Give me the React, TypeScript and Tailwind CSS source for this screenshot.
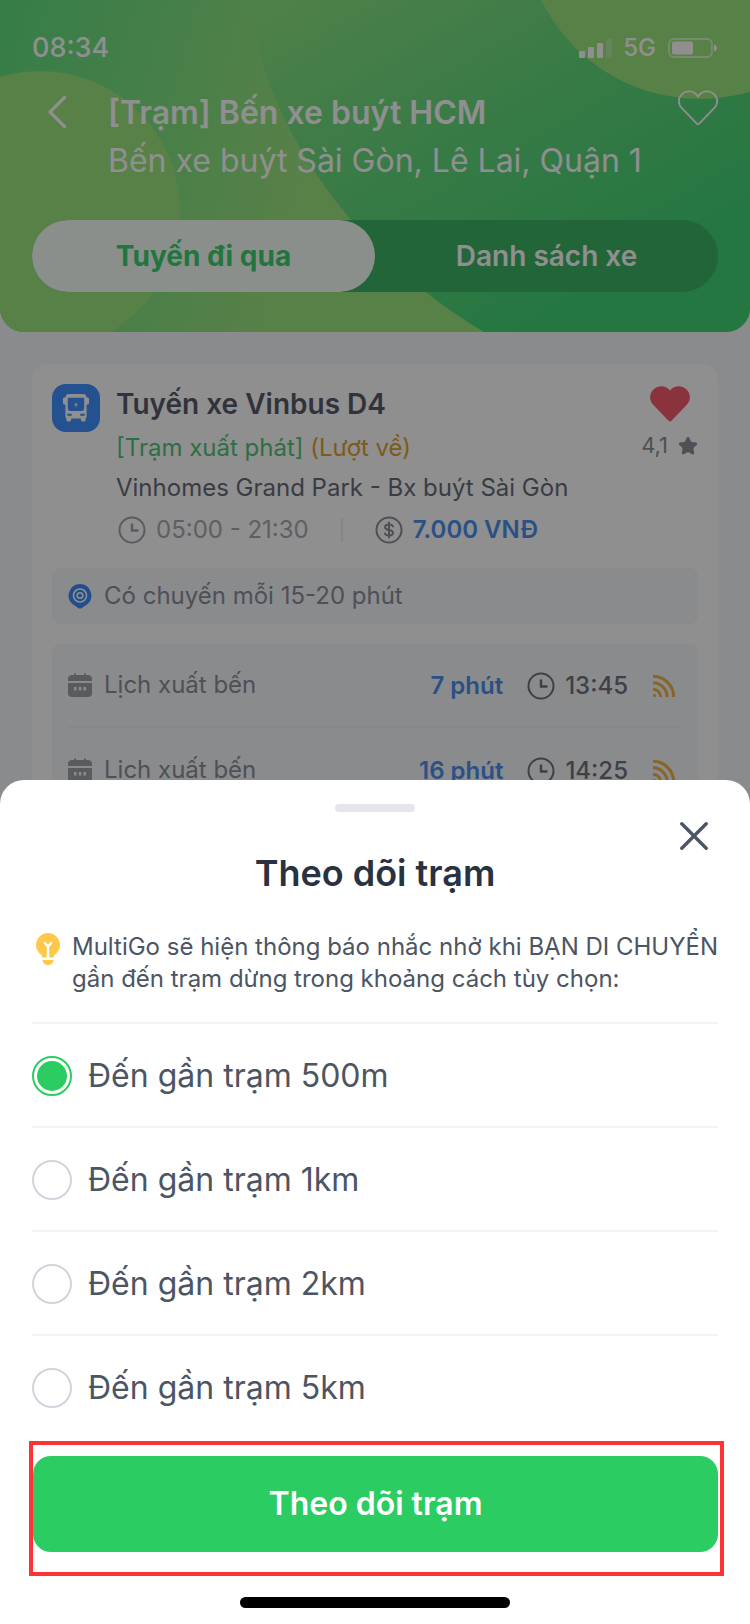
import React, { useState } from 'react';
import { Star } from 'lucide-react';

const departures = [
  { id: 1, wait: '7 phút', time: '13:45' },
  { id: 2, wait: '16 phút', time: '14:25' },
];

const distances = ['500m', '1km', '2km', '5km'];

function ClockIcon({ className }: { className: string }) {
  return (
    <svg viewBox="0 0 28 28" fill="none" stroke="currentColor" className={className}>
      <circle cx="14" cy="14" r="12.5" strokeWidth="2" />
      <path d="M14 7.5V14.5H20.5" strokeWidth="2.4" />
    </svg>
  );
}

function CalendarIcon() {
  return (
    <svg viewBox="0 0 24 24" className="size-6 shrink-0 text-[#a0a2aa]">
      <path
        d="M0 8V6a4 4 0 0 1 4-4h2V0.500h2V2h8V0.500h2V2H20a4 4 0 0 1 4 4v2z"
        fill="currentColor"
      />
      <path
        fillRule="evenodd"
        d="M0 10h24v10a4 4 0 0 1-4 4H4a4 4 0 0 1-4-4zM6 14v3.500h2.500V14zM10.800 14v3.500h2.500V14zM15.500 14v3.500H18V14z"
        fill="currentColor"
      />
    </svg>
  );
}

function FeedIcon() {
  return (
    <svg viewBox="0 0 24 24" fill="none" stroke="#f0b545" strokeWidth="3" className="mr-1.5 size-6 shrink-0">
      <path d="M1 2.300A20.700 20.700 0 0 1 21.700 23" />
      <path d="M1 8.800A14.200 14.200 0 0 1 15.200 23" />
      <path d="M1 15.300A7.700 7.700 0 0 1 8.700 23" />
      <circle cx="2.500" cy="21.500" r="1.500" fill="#f0b545" stroke="none" />
    </svg>
  );
}

function BusIcon() {
  return (
    <div className="flex size-12 shrink-0 items-center justify-center rounded-[14px] bg-[#4090ff]">
      <svg viewBox="0 0 28 29" className="size-7">
        <path
          fillRule="evenodd"
          d="M7 0h14a4 4 0 0 1 4 3.500h1A1.500 1.500 0 0 1 27.500 5v4.500A1.500 1.500 0 0 1 26 11H25V23a2 2 0 0 1-1 2v2a1.500 1.500 0 0 1-1.500 1.500h-2A1.500 1.500 0 0 1 19 27v-1.500H9V27a1.500 1.500 0 0 1-1.500 1.500h-2A1.500 1.500 0 0 1 4 27v-2a2 2 0 0 1-1-2V11H2A1.500 1.500 0 0 1 .5 9.500V5A1.500 1.500 0 0 1 2 3.500H3A4 4 0 0 1 7 0zM5.500 5v10a2.500 2.500 0 0 0 2.500 2.500h12a2.500 2.500 0 0 0 2.500-2.500V5a1 1 0 0 0-1-1h-15a1 1 0 0 0-1 1zM5 20.500v2h4.500v-2zM18.500 20.500v2H23v-2z"
          fill="#fff"
        />
        <path d="M15 8l-3 3.500h2l-1 3 3-4h-2z" fill="#fff" />
      </svg>
    </div>
  );
}

function HeaderArt() {
  return (
    <svg
      viewBox="0 0 750 332"
      preserveAspectRatio="none"
      className="absolute inset-0 size-full"
      aria-hidden="true"
    >
      <defs>
        <linearGradient id="left" gradientUnits="userSpaceOnUse" x1="0" y1="0" x2="330" y2="90">
          <stop offset="0" stopColor="#60df80" />
          <stop offset="1" stopColor="#9de680" />
        </linearGradient>
        <linearGradient id="right" gradientUnits="userSpaceOnUse" x1="330" y1="-20" x2="530" y2="330">
          <stop offset="0" stopColor="#8be482" />
          <stop offset="0.500" stopColor="#64da7e" />
          <stop offset="1" stopColor="#42d475" />
        </linearGradient>
      </defs>
      <rect width="750" height="332" fill="url(#left)" />
      <path d="M250 0C258 110 345 250 484 332H750V0Z" fill="url(#right)" />
      <circle cx="40" cy="211" r="140" fill="#9de680" />
      <circle cx="700" cy="-78" r="177" fill="#9de680" />
    </svg>
  );
}

function StatusBar() {
  return (
    <div className="flex h-10 items-center justify-between">
      <span className="text-[27px] font-medium">08:34</span>
      <div className="flex items-center">
        <svg viewBox="0 0 34 20" fill="currentColor" className="h-5 w-[34px]">
          <rect x="0" y="13" width="6" height="7" rx="1" />
          <rect x="9" y="9" width="6" height="11" rx="1" />
          <rect x="18" y="5" width="6" height="15" rx="1" />
          <rect x="27" y="1" width="6" height="19" rx="1" opacity="0.25" />
        </svg>
        <span className="mr-3 ml-2.5 text-2xl font-medium">5G</span>
        <svg viewBox="0 0 50 20" fill="none" className="h-5 w-[50px]">
          <rect x="1" y="1" width="43" height="18" rx="5" stroke="currentColor" strokeWidth="1.800" opacity="0.6" />
          <rect x="4" y="3.500" width="21" height="13" rx="2" fill="currentColor" />
          <path d="M46 6.500c4 1 4 6 0 7z" fill="currentColor" />
        </svg>
      </div>
    </div>
  );
}

function StationHeader() {
  return (
    <header className="relative overflow-hidden rounded-b-3xl px-8 pt-7 pb-10 text-white">
      <HeaderArt />
      <div className="relative">
        <StatusBar />
        <div className="mt-[21px] flex items-start">
          <button type="button" aria-label="Quay lại" className="ml-4 pt-[7px]">
            <svg viewBox="0 0 18 32" fill="none" stroke="currentColor" strokeWidth="3.200" className="h-8 w-[18px]">
              <path d="M16.500 1.500L2 16l14.500 14.500" strokeLinecap="round" strokeLinejoin="round" />
            </svg>
          </button>
          <div className="ml-[42px] flex-1 text-[32px] leading-12">
            <h1 className="font-semibold">[Trạm] Bến xe buýt HCM</h1>
            <p>Bến xe buýt Sài Gòn, Lê Lai, Quận 1</p>
          </div>
          <button type="button" aria-label="Yêu thích" className="pt-px">
            <svg viewBox="0 0 40 36" fill="none" stroke="currentColor" strokeWidth="1.800" className="h-9 w-10">
              <path
                d="M20 6.500C24 1 31 -.5 35.800 3.800C40.200 8 40.200 14 36.200 18.200L21 33.900Q20 34.900 19 33.900L3.800 18.200C-.2 14 -.2 8 4.200 3.800C9 -.5 16 1 20 6.500Z"
                strokeLinejoin="round"
              />
            </svg>
          </button>
        </div>
        <div className="mt-[35px] grid grid-cols-2 rounded-full bg-[#3bb464] text-[28px] leading-[72px] font-semibold">
          <button type="button" className="rounded-full bg-[#f8fff9] font-bold text-[#3fd072]">
            Tuyến đi qua
          </button>
          <button type="button">Danh sách xe</button>
        </div>
      </div>
    </header>
  );
}

function RouteCard() {
  return (
    <article className="mx-8 mt-8 rounded-2xl bg-white p-5 text-2xl text-[#8c8f9a]">
      <div className="flex items-start">
        <BusIcon />
        <div className="ml-4 flex-1">
          <h2 className="text-[28px] leading-10 font-semibold text-[#585c6b]">Tuyến xe Vinbus D4</h2>
          <p className="mt-1 leading-10 text-[#e0a030]">
            <span className="text-[#53c57a]">[Trạm xuất phát]</span> (Lượt về)
          </p>
          <p className="leading-10 text-[#686c79]">Vinhomes Grand Park - Bx buýt Sài Gòn</p>
          <div className="mt-0.5 flex h-10 items-center">
            <ClockIcon className="ml-0.5 size-7 text-[#a0a2ab]" />
            <span className="ml-2.5 text-[#a8aab3]">05:00 - 21:30</span>
            <span className="mx-8 h-6 w-0.5 bg-[#eeeeef]" />
            <svg viewBox="0 0 28 28" fill="none" stroke="currentColor" strokeWidth="2" className="size-7">
              <circle cx="14" cy="14" r="12.500" />
              <path
                d="M18 10.500C17.500 9 16 8.500 14 8.500C11.500 8.500 10 9.500 10 11.200C10 13 11.500 13.500 14 14C16.500 14.500 18 15 18 16.800C18 18.500 16.500 19.500 14 19.500C12 19.500 10.500 19 10 17.500M14 6.500V21.500"
                strokeLinecap="round"
              />
            </svg>
            <span className="ml-2.5 font-semibold text-[#4b8fee]">7.000 VNĐ</span>
          </div>
        </div>
        <div className="flex flex-col items-end">
          <svg viewBox="0 0 40 36" className="mt-0.5 mr-2 h-9 w-10">
            <path
              d="M20 4.500C24.500 -.8 31.500 -1 36.200 3.200C41 7.500 41 14.500 36.800 18.800L21.500 34.800Q20 36.200 18.500 34.800L3.200 18.800C-1 14.500 -1 7.500 3.800 3.200C8.500 -1 15.500 -.8 20 4.500Z"
              fill="#f75b6b"
            />
          </svg>
          <div className="mt-1 flex h-10 items-center gap-2.5 text-[22px]">
            4,1
            <Star className="size-5 fill-current" />
          </div>
        </div>
      </div>

      <div className="mt-[18px] flex h-14 items-center gap-3 rounded-lg bg-[#f6f8fb] px-4">
        <svg viewBox="0 0 24 26" fill="none" className="h-[26px] w-6">
          <path d="M12 1A11.500 11.500 0 0 1 19 21.500L13.500 25.200Q12 26 10.500 25.200L5 21.500A11.500 11.500 0 0 1 12 1Z" fill="#3f8cf8" />
          <circle cx="12" cy="12.500" r="6.500" stroke="#fff" strokeWidth="1.600" />
          <circle cx="12" cy="12.500" r="2.800" stroke="#fff" strokeWidth="1.600" />
        </svg>
        <span>Có chuyến mỗi 15-20 phút</span>
      </div>

      <ul className="mt-5 divide-y-2 divide-[#f1f2f5] rounded-lg bg-[#f6f8fb] px-4">
        {departures.map((departure) => (
          <li key={departure.id} className="flex h-[84px] items-center">
            <CalendarIcon />
            <span className="ml-3 flex-1">Lịch xuất bến</span>
            <div className="flex items-center pt-0.5 font-medium text-[#70737f]">
              <span className="font-semibold text-[#4b8fee]">{departure.wait}</span>
              <ClockIcon className="ml-6 size-7" />
              <span className="mr-6 ml-2.5">{departure.time}</span>
              <FeedIcon />
            </div>
          </li>
        ))}
      </ul>
    </article>
  );
}

function FollowSheet() {
  const [distance, setDistance] = useState('500m');

  return (
    <section
      role="dialog"
      aria-labelledby="sheet-title"
      className="fixed inset-x-0 bottom-0 flex flex-col rounded-t-3xl bg-white px-8 pt-6 pb-4 text-[#4b5563]"
    >
      <div className="h-2 w-20 self-center rounded-full bg-[#e5e5ea]" />
      <button type="button" aria-label="Đóng" className="mt-2.5 mr-2.5 self-end">
        <svg viewBox="0 0 28 28" fill="none" stroke="currentColor" strokeWidth="3.400" className="size-7">
          <path d="M1.800 1.800l24.400 24.400M26.200 1.800L1.800 26.200" strokeLinecap="round" />
        </svg>
      </button>
      <h2 id="sheet-title" className="text-center text-4xl leading-[46px] font-semibold text-[#293241]">
        Theo dõi trạm
      </h2>

      <div className="-mr-4 mt-[35px] flex items-start pb-[27px]">
        <svg viewBox="0 0 24 32" className="mt-0.5 ml-1 h-8 w-6 shrink-0">
          <path d="M12 0A12 12 0 0 1 18 22.400V23.500Q18 24.500 17 24.500H7Q6 24.500 6 23.500V22.400A12 12 0 0 1 12 0Z" fill="#fec94b" />
          <path d="M8.800 10L12 13.500L15.200 10M12 13.500V24.500" stroke="#fff" strokeWidth="2.400" fill="none" strokeLinecap="round" />
          <path d="M6.500 27h11Q17 32 12 32T6.500 27Z" fill="#fec94b" />
        </svg>
        <p className="ml-3 text-2xl leading-8">
          MultiGo sẽ hiện thông báo nhắc nhở khi BẠN DI CHUYỂN gần đến trạm dừng trong khoảng cách tùy chọn:
        </p>
      </div>

      {distances.map((item) => (
        <label key={item} className="flex h-[104px] items-center gap-4 border-t-2 border-[#f3f3f4] pt-0.5 text-[32px]">
          <input
            type="radio"
            name="distance"
            value={item}
            checked={distance === item}
            onChange={() => setDistance(item)}
            className="size-10 appearance-none rounded-full border-2 border-[#d1d5db] bg-white p-[3px] bg-clip-content checked:border-[#2bcc62] checked:bg-[#2bcc62]"
          />
          Đến gần trạm {item}
        </label>
      ))}

      <div className="mt-[3px] -mr-1.5 -ml-[3px] border-4 border-[#ff3333] pt-[11px] pr-0.5 pb-5">
        <button
          type="button"
          className="h-24 w-full rounded-[18px] bg-[#2bcc62] text-[32px] font-semibold text-white"
        >
          Theo dõi trạm
        </button>
      </div>
      <div className="mt-[21px] h-[11px] w-[270px] self-center rounded-full bg-black" />
    </section>
  );
}

export default function App() {
  return (
    <main className="relative h-screen overflow-hidden bg-[#f6f8fb] font-['Inter','Noto_Sans',sans-serif]">
      <StationHeader />
      <RouteCard />
      <div className="fixed inset-0 bg-black/44" />
      <FollowSheet />
    </main>
  );
}
